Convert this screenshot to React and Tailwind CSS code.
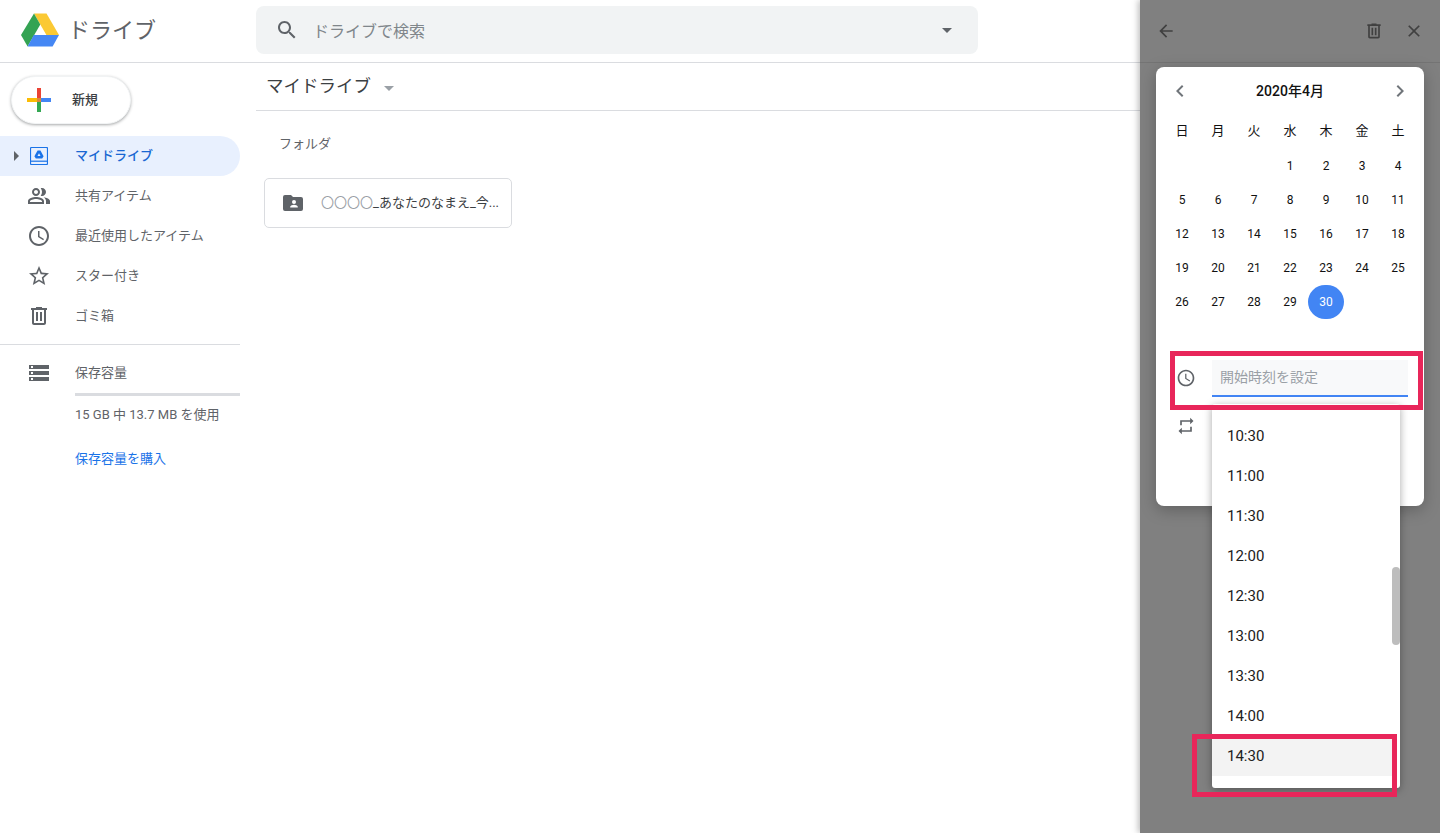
import React from "react";

const FONT = "[font-family:Roboto,'Noto_Sans_CJK_JP',sans-serif]";

function Icon({ d, className = "w-6 h-6", fill = "#5f6368" }) {
  return (
    <svg viewBox="0 0 24 24" className={className} fill={fill}>
      <path d={d} />
    </svg>
  );
}

const ICONS = {
  search: "M15.5 14h-.79l-.28-.27C15.41 12.59 16 11.11 16 9.5 16 5.91 13.09 3 9.5 3S3 5.91 3 9.5 5.91 16 9.5 16c1.61 0 3.09-.59 4.23-1.57l.27.28v.79l5 4.99L20.49 19l-4.99-5zm-6 0C7.01 14 5 11.99 5 9.5S7.01 5 9.5 5 14 7.01 14 9.5 11.99 14 9.5 14z",
  people: "M15 8c0-1.42-.5-2.73-1.33-3.76.42-.14.86-.24 1.33-.24 2.21 0 4 1.79 4 4s-1.79 4-4 4c-.43 0-.84-.09-1.23-.21-.03-.01-.06-.02-.1-.03A5.98 5.98 0 0 0 15 8zm1.66 5.13C18.03 14.06 19 15.32 19 17v3h4v-3c0-2.18-3.58-3.47-6.34-3.87zM9 6c-1.1 0-2 .9-2 2s.9 2 2 2 2-.9 2-2-.9-2-2-2m0 9c-2.7 0-5.8 1.29-6 2.01V18h12v-1c-.2-.71-3.3-2-6-2M9 4c2.21 0 4 1.79 4 4s-1.79 4-4 4-4-1.79-4-4 1.79-4 4-4zm0 9c2.67 0 8 1.34 8 4v3H1v-3c0-2.66 5.33-4 8-4z",
  clock: "M11.99 2C6.47 2 2 6.48 2 12s4.47 10 9.99 10C17.52 22 22 17.52 22 12S17.52 2 11.99 2zM12 20c-4.42 0-8-3.58-8-8s3.58-8 8-8 8 3.58 8 8-3.58 8-8 8zm.5-13H11v6l5.25 3.15.75-1.23-4.5-2.67z",
  star: "M22 9.24l-7.19-.62L12 2 9.19 8.63 2 9.24l5.46 4.73L5.82 21 12 17.27 18.18 21l-1.63-7.03L22 9.24zM12 15.4l-3.76 2.27 1-4.28-3.32-2.88 4.38-.38L12 6.1l1.71 4.04 4.38.38-3.32 2.88 1 4.28L12 15.4z",
  trash: "M15 4V3H9v1H4v2h1v13c0 1.1.9 2 2 2h10c1.1 0 2-.9 2-2V6h1V4h-5zm2 15H7V6h10v13zM9 8h2v9H9zm4 0h2v9h-2z",
  storage: "M2 20h20v-4H2v4zm2-3h2v2H4v-2zM2 4v4h20V4H2zm4 3H4V5h2v2zm-4 7h20v-4H2v4zm2-3h2v2H4v-2z",
  back: "M20 11H7.83l5.59-5.59L12 4l-8 8 8 8 1.41-1.41L7.83 13H20v-2z",
  close: "M19 6.41L17.59 5 12 10.59 6.41 5 5 6.41 10.59 12 5 17.59 6.41 19 12 13.41 17.59 19 19 17.59 13.41 12z",
  left: "M15.41 7.41L14 6l-6 6 6 6 1.41-1.41L10.83 12z",
  right: "M10 6L8.59 7.41 13.17 12l-4.58 4.59L10 18l6-6z",
  repeat: "M7 7h10v3l4-4-4-4v3H5v6h2V7zm10 10H7v-3l-4 4 4 4v-3h12v-6h-2v4z",
};

function DriveLogo() {
  return (
    <svg viewBox="0 0 38 34" className="w-[38px] h-[34px]">
      <path d="M13 0.5h12.5L38 22H25.4z" fill="#fbc934" />
      <path d="M13 0.5l6.3 10.9L6.6 33.5 0 22z" fill="#34a353" />
      <path d="M12.8 22H38l-6.4 11.5H6.6z" fill="#4587f4" />
    </svg>
  );
}

function PlusLogo() {
  return (
    <svg viewBox="0 0 24 24" className="w-6 h-6">
      <rect x="10" y="0" width="4" height="10" fill="#ea4335" />
      <rect x="14" y="10" width="10" height="4" fill="#4285f4" />
      <rect x="10" y="14" width="4" height="10" fill="#34a853" />
      <rect x="0" y="10" width="10" height="4" fill="#fbbc05" />
      <rect x="10" y="10" width="4" height="4" fill="#d9893a" />
    </svg>
  );
}

function MyDriveIcon() {
  return (
    <svg viewBox="0 0 18 18" className="w-[18px] h-[18px]">
      <path d="M1.5 0.5h15a1 1 0 0 1 1 1v15a1 1 0 0 1-1 1h-15a1 1 0 0 1-1-1v-15a1 1 0 0 1 1-1z" fill="none" stroke="#1a73e8" strokeWidth="1.2" />
      <rect x="1" y="13.6" width="16" height="1.2" fill="#1a73e8" />
      <path d="M7.6 3.6h2.8l3.2 5.6-1.4 2.3H5.8L4.4 9.2z" fill="#1a73e8" />
      <path d="M9 6.2l1.5 2.7h-3z" fill="#e8f0fe" />
    </svg>
  );
}

function FolderIcon() {
  return (
    <svg viewBox="0 0 20 16" className="w-5 h-4">
      <path d="M2 0h6l2 2h8a2 2 0 0 1 2 2v10a2 2 0 0 1-2 2H2a2 2 0 0 1-2-2V2a2 2 0 0 1 2-2z" fill="#5f6368" />
      <circle cx="11" cy="7" r="2" fill="#fff" />
      <path d="M7.2 12.5v-.8c0-1.3 2.5-2 3.8-2s3.8.7 3.8 2v.8z" fill="#fff" />
    </svg>
  );
}

const NAV = [
  { label: "共有アイテム", icon: "people" },
  { label: "最近使用したアイテム", icon: "clock" },
  { label: "スター付き", icon: "star" },
  { label: "ゴミ箱", icon: "trash" },
];

const WEEK = ["日", "月", "火", "水", "木", "金", "土"];
const TIMES = ["10:30", "11:00", "11:30", "12:00", "12:30", "13:00", "13:30", "14:00", "14:30"];

function Sidebar() {
  return (
    <aside className="w-[256px] shrink-0 pr-4">
      <div className="pt-[13px] pl-[11px]">
        <button className="w-[120px] h-[48px] rounded-full bg-white flex items-center pl-[15px] gap-[21px] text-[13px] text-[#3c4043] font-medium border border-[#f1f3f4] shadow-[0_1px_3px_rgba(60,64,67,0.45)]">
          <PlusLogo />
          新規
        </button>
      </div>
      <nav className="mt-3">
        <div className="relative h-10 rounded-r-full bg-[#e8f0fe] flex items-center text-[13px] font-medium text-[#1967d2]">
          <span className="ml-[14px] w-0 h-0 border-y-[5px] border-y-transparent border-l-[5px] border-l-[#5f6368]" />
          <span className="ml-[11px] flex"><MyDriveIcon /></span>
          <span className="ml-[27px] mb-[1px]">マイドライブ</span>
        </div>
        {NAV.map((item) => (
          <div key={item.label} className="h-10 flex items-center text-[13px] text-[#5f6368]">
            <span className="ml-[27px] flex"><Icon d={ICONS[item.icon]} /></span>
            <span className="ml-[24px] mb-[1px]">{item.label}</span>
          </div>
        ))}
      </nav>
      <div className="mt-[8px] border-t border-[#dadce0]" />
      <div className="h-[56px] flex items-start pt-[16px] text-[13px] text-[#5f6368]">
        <span className="ml-[27px] flex"><Icon d={ICONS.storage} /></span>
        <span className="ml-[24px] mt-[2px]">保存容量</span>
      </div>
      <div className="ml-[75px]">
        <div className="mt-[-8px] h-[3px] bg-[#dadce0]" />
        <div className="mt-[9px] text-[13px] text-[#5f6368]">15 GB 中 13.7 MB を使用</div>
        <div className="mt-[24px] text-[13px] text-[#1a73e8]">保存容量を購入</div>
      </div>
    </aside>
  );
}

function MainArea() {
  return (
    <main className="flex-1">
      <div className="h-[48px] border-b border-[#dadce0] flex items-center pl-[10px]">
        <span className="text-[17.5px] text-[#3c4043]">マイドライブ</span>
        <span className="ml-[13px] mt-[3px] w-0 h-0 border-x-[5px] border-x-transparent border-t-[5px] border-t-[#9aa0a6]" />
      </div>
      <div className="pl-2">
        <div className="pl-[15px] mt-[23px] text-[13px] leading-[20px] text-[#5f6368]">フォルダ</div>
        <div className="mt-[24px] w-[248px] h-[50px] border border-[#dadce0] rounded-[5px] flex items-center pl-[18px]">
          <FolderIcon />
          <span className="ml-[18px] whitespace-nowrap text-[13px] text-[#3c4043]">
            <span className="text-[#9aa0a6]">〇〇〇〇</span>_あなたのなまえ_今...
          </span>
        </div>
      </div>
    </main>
  );
}

function Calendar() {
  const cells = [...Array(3).fill(null)];
  for (let i = 1; i <= 30; i++) cells.push(i);

  return (
    <div className="mx-4 mt-[4px] h-[439px] bg-white rounded-[8px] shadow-[0_4px_16px_rgba(0,0,0,0.25)] px-2">
      <div className="h-[48px] flex items-center justify-between px-1">
        <Icon d={ICONS.left} fill="#70757a" />
        <span className="text-[14px] font-medium text-[#111]">2020年4月</span>
        <Icon d={ICONS.right} fill="#70757a" />
      </div>
      <div className="grid grid-cols-[repeat(7,36px)] auto-rows-[34px] text-[12px] text-[#111]">
        {WEEK.map((w) => (
          <div key={w} className="flex items-center justify-center text-[13px] pb-[2px]">{w}</div>
        ))}
        {cells.map((n, i) => (
          <div
            key={i}
            className={n === 30 ? "flex items-center justify-center rounded-full bg-[#4285f4] text-white" : "flex items-center justify-center"}
          >
            {n}
          </div>
        ))}
      </div>
      <div className="mt-[41px] flex h-[37px]">
        <span className="ml-[12px] mt-[8px] flex h-5"><Icon d={ICONS.clock} className="w-5 h-5" /></span>
        <div className="ml-[16px] w-[196px] bg-[#f8f9fa] border-b-2 border-[#4285f4] flex items-center pl-2 text-[14px] text-[#9aa0a6]">
          開始時刻を設定
        </div>
      </div>
      <div className="mt-[19px] ml-[12px] flex">
        <Icon d={ICONS.repeat} className="w-5 h-5" />
      </div>
    </div>
  );
}

function TimeMenu() {
  return (
    <div className="absolute left-[72px] top-[404px] w-[188px] h-[384px] bg-white rounded-[3px] shadow-[0_2px_8px_rgba(0,0,0,0.35)] pt-[12px] overflow-hidden">
      {TIMES.map((t) => (
        <div
          key={t}
          className={t === "14:30" ? "h-10 w-[180px] pl-[15px] flex items-center text-[15px] text-[#212121] bg-[#f3f3f3]" : "h-10 w-[180px] pl-[15px] flex items-center text-[15px] text-[#212121]"}
        >
          {t}
        </div>
      ))}
      <div className="absolute right-0 top-[163px] w-2 h-[78px] rounded-full bg-[#bdbdbd]" />
    </div>
  );
}

function SidePanel() {
  return (
    <section className="relative w-[300px] shrink-0 bg-[#808080] shadow-[-2px_0_6px_rgba(0,0,0,0.25)]">
      <div className="h-[63px] border-b border-[#747474] flex items-center pl-4 pr-4">
        <Icon d={ICONS.back} fill="#404040" className="w-5 h-5" />
        <span className="flex-1" />
        <Icon d={ICONS.trash} fill="#404040" className="w-5 h-5" />
        <span className="ml-5 flex"><Icon d={ICONS.close} fill="#404040" className="w-5 h-5" /></span>
      </div>
      <Calendar />
      <TimeMenu />
      <div className="absolute left-[30px] top-[351px] w-[253px] h-[59px] border-[5px] border-[#e8265a]" />
      <div className="absolute left-[52px] top-[734px] w-[205px] h-[63px] border-[5px] border-[#e8265a]" />
    </section>
  );
}

export default function App() {
  return (
    <div className={`${FONT} flex h-[833px] overflow-hidden bg-white`}>
      <div className="flex-1 flex flex-col">
        <header className="h-[63px] shrink-0 border-b border-[#dadce0] flex items-center">
          <div className="w-[256px] shrink-0 flex items-center pl-[21px] pb-[2px]">
            <DriveLogo />
            <span className="ml-[9px] text-[22px] text-[#5f6368]">ドライブ</span>
          </div>
          <div className="w-[722px] h-[48px] mb-[2px] rounded-[8px] bg-[#f1f3f4] flex items-center pl-[19px] pr-[26px]">
            <Icon d={ICONS.search} />
            <span className="ml-[14px] mt-[4px] flex-1 text-[16px] text-[#80868b]">ドライブで検索</span>
            <span className="w-0 h-0 border-x-[5px] border-x-transparent border-t-[5px] border-t-[#5f6368]" />
          </div>
        </header>
        <div className="flex-1 flex">
          <Sidebar />
          <MainArea />
        </div>
      </div>
      <SidePanel />
    </div>
  );
}
